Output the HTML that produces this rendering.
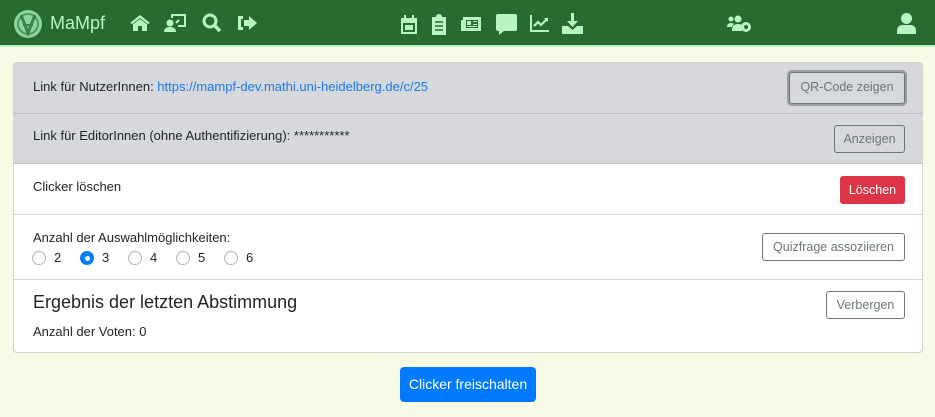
<!DOCTYPE html>
<html><head><meta charset="utf-8"><style>
*{box-sizing:border-box;margin:0;padding:0}
body{width:935px;height:417px;background:#f8fae6;font-family:"Liberation Sans",sans-serif;font-size:13px;color:#212529;position:relative;overflow:hidden}
.nav{position:absolute;left:0;top:0;width:935px;height:47px;background:#286b30;border-bottom:2px solid #b9f5c4}
.abs{position:absolute}
.ic{position:absolute;fill:#b9f5c4}
.card{position:absolute;left:13px;top:62px;width:910px;height:291px;border:1px solid #d0d0d0;border-radius:4px;background:#fff;overflow:hidden}
.row{position:absolute;left:0;width:908px;border-bottom:1px solid #d6d6d6}
.btn{position:absolute;border:1px solid #6c757d;border-radius:3px;color:#6c757d;font-size:12.5px;text-align:center;line-height:26px;height:28px;background:transparent}
.rad{position:absolute;top:252px;width:14px;height:14px;border:1px solid #adb5bd;border-radius:50%;background:#fff}
.rl{position:absolute;top:250px;font-size:13px}
</style></head><body>
<div class="nav">
<svg class="abs" style="left:13px;top:9px" width="30" height="30" viewBox="0 0 30 30"><circle cx="15" cy="15" r="14" fill="#8fd3a0"/><circle cx="15" cy="15" r="10" fill="none" stroke="#4f9a63" stroke-width="2"/><path d="M8 6 L15 24 L22 6" fill="none" stroke="#3d7f4d" stroke-width="3"/><path d="M10 16 H20" stroke="#3d7f4d" stroke-width="2"/></svg>
<div class="abs" style="left:50px;top:13px;color:#b9f5c4;font-size:18px">MaMpf</div>
<svg class="ic" style="left:129px;top:14px" width="22" height="18" viewBox="0 0 22 18"><path d="M11 1 L1 9 L3 10 L11 4 L19 10 L21 9 Z M4 10 V17 H9 V12 H13 V17 H18 V10 L11 5 Z"/></svg>
<svg class="ic" style="left:164px;top:12px" width="24" height="21" viewBox="0 0 24 21"><path d="M7 2 H22 V15 H14 V13 H20 V4 H9 V6 H7 Z"/><circle cx="6" cy="11" r="3.5"/><path d="M0 20 Q0 15 6 15 Q12 15 12 20 Z"/><path d="M12 11 L15 8" stroke="#b9f5c4" stroke-width="2"/></svg>
<svg class="ic" style="left:202px;top:13px" width="20" height="20" viewBox="0 0 20 20"><circle cx="8" cy="8" r="6" fill="none" stroke="#b9f5c4" stroke-width="3"/><path d="M12 12 L18 18" stroke="#b9f5c4" stroke-width="3.5"/></svg>
<svg class="ic" style="left:236px;top:14px" width="22" height="18" viewBox="0 0 22 18"><path d="M7 2 H2 V16 H7 V13 H5 V5 H7 Z"/><path d="M8 6 H13 V2 L21 9 L13 16 V12 H8 Z"/></svg>
<svg class="ic" style="left:400px;top:14px" width="18" height="21" viewBox="0 0 18 21"><path d="M1 4 H17 V20 H1 Z M3 9 V18 H15 V9 Z M4 1 H6 V5 H4 Z M12 1 H14 V5 H12 Z"/><path d="M5 11 H13 V16 H5 Z"/></svg>
<svg class="ic" style="left:431px;top:14px" width="16" height="21" viewBox="0 0 16 21"><path d="M1 3 H5 Q5 0 8 0 Q11 0 11 3 H15 V21 H1 Z"/><path d="M4 8 H12 M4 12 H12 M4 16 H12" stroke="#286b30" stroke-width="1.5"/></svg>
<svg class="ic" style="left:460px;top:16px" width="22" height="16" viewBox="0 0 22 16"><path d="M3 1 H21 V15 H1 V4 H3 Z"/><path d="M6 4 H18 V12 H6 Z" fill="#286b30"/><path d="M7 5 H11 V9 H7 Z M13 5 H17 V6 H13 Z M13 8 H17 V9 H13 Z M7 10 H17 V11 H7 Z"/></svg>
<svg class="ic" style="left:496px;top:14px" width="21" height="21" viewBox="0 0 21 21"><path d="M2 0 H19 Q21 0 21 2 V15 Q21 17 19 17 H8 L3 21 V17 H2 Q0 17 0 15 V2 Q0 0 2 0 Z"/></svg>
<svg class="ic" style="left:530px;top:15px" width="20" height="17" viewBox="0 0 20 17"><path d="M1 0 V16 H19" fill="none" stroke="#b9f5c4" stroke-width="2"/><path d="M4 11 L8 7 L11 10 L17 4" fill="none" stroke="#b9f5c4" stroke-width="2.2"/><path d="M14 3 H18 V7 Z"/></svg>
<svg class="ic" style="left:562px;top:13px" width="21" height="21" viewBox="0 0 21 21"><path d="M9 0 H12 V8 H16 L10.5 14 L5 8 H9 Z"/><path d="M0 13 H6 L10.5 17 L15 13 H21 V21 H0 Z"/></svg>
<svg class="ic" style="left:727px;top:14px" width="25" height="20" viewBox="0 0 25 20"><circle cx="4" cy="5" r="2.5"/><circle cx="11" cy="5" r="3.5"/><path d="M0 13 Q0 9 4 9 Q6 9 7 10 Q5 12 5 13 Z M5 16 Q5 10 11 10 Q14 10 15 11 L15 17 H5 Z"/><circle cx="19" cy="13" r="5"/><circle cx="19" cy="13" r="2" fill="#286b30"/></svg>
<svg class="ic" style="left:897px;top:13px" width="19" height="21" viewBox="0 0 19 21"><circle cx="9.5" cy="5.5" r="5.5"/><path d="M0 21 V18 Q0 12 6 12 H13 Q19 12 19 18 V21 Z"/></svg>
</div>

<div class="card">
<div class="row" style="top:0;height:51px;background:#d6d8db;border-bottom-color:#bcbfc3">
<div class="abs" style="left:19px;top:16px">Link für NutzerInnen: <span style="color:#1a7bf0">https://mampf-dev.mathi.uni-heidelberg.de/c/25</span></div>
<div class="btn" style="left:775px;top:9px;width:116px;height:32px;line-height:28px;box-shadow:0 0 0 2px #9a9ea3;border-color:#6c757d">QR-Code zeigen</div>
</div>
<div class="row" style="top:51px;height:50px;background:#d6d8db;border-bottom-color:#bcbfc3">
<div class="abs" style="left:19px;top:14px">Link für EditorInnen (ohne Authentifizierung): ***********</div>
<div class="btn" style="left:820px;top:11px;width:71px">Anzeigen</div>
</div>
<div class="row" style="top:101px;height:51px">
<div class="abs" style="left:19px;top:15px">Clicker löschen</div>
<div class="btn" style="left:826px;top:12px;width:65px;background:#dc3545;border-color:#dc3545;color:#fff">Löschen</div>
</div>
<div class="row" style="top:152px;height:65px">
<div class="abs" style="left:19px;top:15px">Anzahl der Auswahlmöglichkeiten:</div>
<div class="btn" style="left:748px;top:18px;width:143px">Quizfrage assoziieren</div>
</div>
<div class="abs" style="left:19px;top:229px;font-size:18px">Ergebnis der letzten Abstimmung</div>
<div class="abs" style="left:19px;top:261px">Anzahl der Voten: 0</div>
<div class="btn" style="left:812px;top:228px;width:79px">Verbergen</div>
</div>
<div class="rad" style="left:32px;top:251px"></div><div class="rl" style="left:54px">2</div>
<div class="rad" style="left:80px;top:251px;background:#007bff;border-color:#007bff"><div style="position:absolute;left:3.5px;top:3.5px;width:5px;height:5px;border-radius:50%;background:#fff"></div></div><div class="rl" style="left:102px">3</div>
<div class="rad" style="left:128px;top:251px"></div><div class="rl" style="left:150px">4</div>
<div class="rad" style="left:176px;top:251px"></div><div class="rl" style="left:198px">5</div>
<div class="rad" style="left:224px;top:251px"></div><div class="rl" style="left:246px">6</div>

<div class="abs" style="left:400px;top:367px;width:136px;height:35px;background:#007bff;border-radius:4px;color:#fff;font-size:14px;text-align:center;line-height:35px">Clicker freischalten</div>
</body></html>
